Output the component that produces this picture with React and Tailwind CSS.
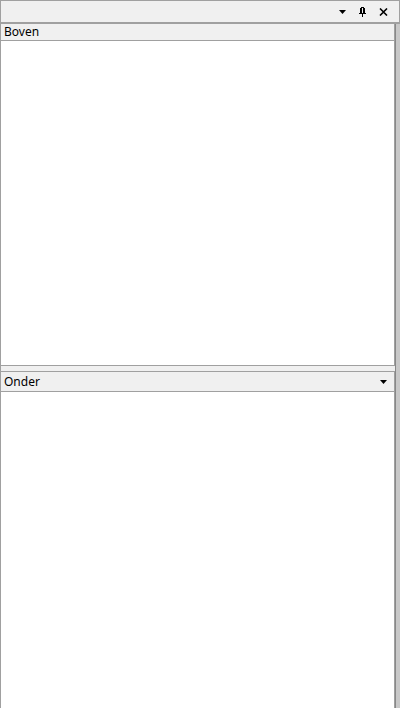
import React from "react";

function Arrow() {
  return (
    <svg width="7" height="4" viewBox="0 0 7 4" className="block">
      <path d="M0 0H7L3.5 4Z" fill="#000" />
    </svg>
  );
}

function Pin() {
  return (
    <svg width="7" height="10" viewBox="0 0 7 10" className="block">
      <path d="M2 0H5V1H6V6H7V7H4V10H3V7H0V6H1V1H2Z M3 1V6H4V1Z" fill="#000" fillRule="evenodd" />
    </svg>
  );
}

function Close() {
  return (
    <svg width="9" height="8" viewBox="0 0 9 8" className="block">
      <path d="M1 0.5L8 7.5M8 0.5L1 7.5" stroke="#000" strokeWidth="1.6" />
    </svg>
  );
}

export default function App() {
  return (
    <div
      className="w-[400px] h-[708px] bg-[#f0f0f0] flex flex-col border-t border-l border-[#a0a0a0] overflow-hidden"
      style={{ fontFamily: '"Noto Sans", "DejaVu Sans", sans-serif' }}
    >
      <div className="h-[23px] shrink-0 flex items-center justify-end gap-[13px] pr-[11px] border-b-2 border-[#a0a0a0] border-r">
        <Arrow />
        <Pin />
        <Close />
      </div>
      <div className="flex-1 flex">
        <div className="w-[394px] flex flex-col">
          <div className="h-[342px] shrink-0 flex flex-col border-r border-[#a0a0a0]">
            <div className="h-[17px] shrink-0 flex items-center pl-[3px] text-[12px] leading-none text-black border-b border-[#a0a0a0]">
              Boven
            </div>
            <div className="flex-1 bg-white border-b border-[#a0a0a0]" />
          </div>
          <div className="h-[5px] shrink-0" />
          <div className="flex-1 flex flex-col border-t border-r border-[#a0a0a0]">
            <div className="h-[20px] shrink-0 flex items-center justify-between pl-[3px] pr-[7px] text-[12px] leading-none text-black border-b border-[#a0a0a0]">
              <span>Onder</span>
              <Arrow />
            </div>
            <div className="flex-1 bg-white" />
          </div>
        </div>
        <div className="flex-1 border-l border-[#888888] bg-[#c8c8c8]" />
      </div>
    </div>
  );
}
